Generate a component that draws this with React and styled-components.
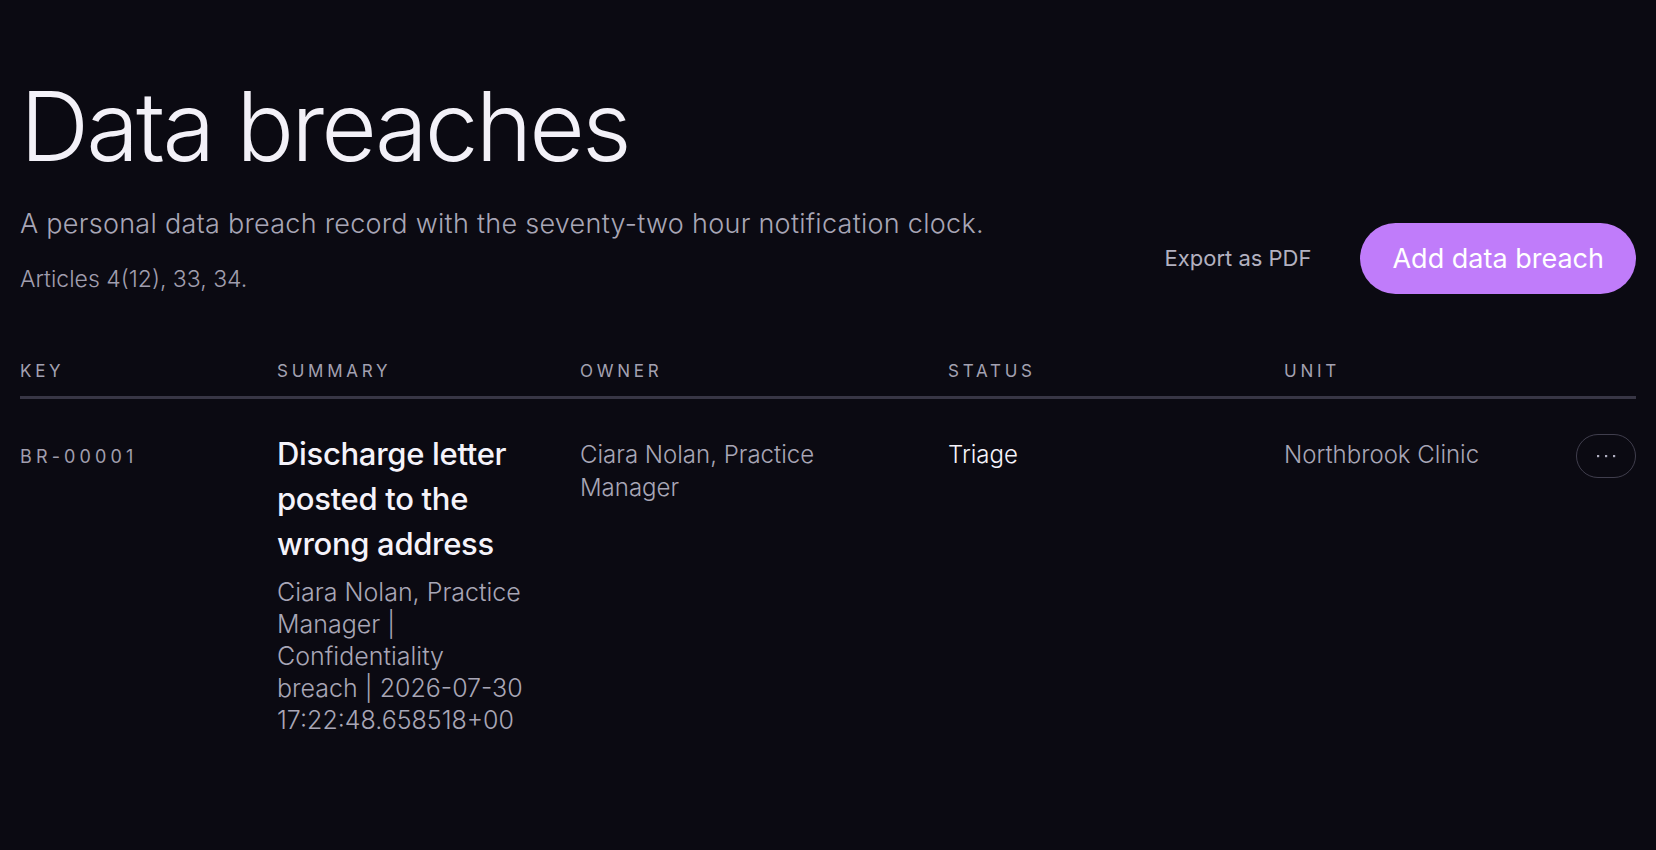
import React from "react";
import styled, { createGlobalStyle } from "styled-components";

const GlobalStyle = createGlobalStyle`
  html, body { margin: 0; padding: 0; background: #0b0a12; }
  body { font-family: Inter, "Noto Sans", sans-serif; color: #f2f0f7; }
  * { box-sizing: border-box; }
`;

const Page = styled.main`
  min-height: 850px;
  padding: 74px 20px 40px;
  background: #0b0a12;
`;

const Header = styled.header`
  display: flex;
  justify-content: space-between;
  align-items: flex-end;
`;

const TitleBlock = styled.div`
  display: flex;
  flex-direction: column;
`;

const Title = styled.h1`
  margin: 0;
  font-size: 96px;
  line-height: 1.1;
  font-weight: 300;
  letter-spacing: -0.03em;
  color: #f3f1f8;
`;

const Subtitle = styled.p`
  margin: 26px 0 0;
  font-size: 27px;
  line-height: 35px;
  font-weight: 300;
  letter-spacing: 0.01em;
  color: #a8a6b6;
`;

const Articles = styled.p`
  margin: 23px 0 0;
  font-size: 23px;
  line-height: 30px;
  font-weight: 300;
  color: #a09eae;
`;

const Actions = styled.div`
  display: flex;
  align-items: center;
  gap: 49px;
`;

const GhostButton = styled.button`
  background: transparent;
  border: none;
  padding: 0;
  font-family: inherit;
  font-size: 22px;
  font-weight: 400;
  color: #b3b1c0;
  cursor: pointer;
`;

const PrimaryButton = styled.button`
  height: 71px;
  padding: 0 32px;
  border: none;
  border-radius: 999px;
  background: #c07cfa;
  color: #ffffff;
  font-family: inherit;
  font-size: 27px;
  font-weight: 400;
  cursor: pointer;
`;

const Table = styled.div`
  margin-top: 65px;
  display: grid;
  grid-template-columns: 257px 303px 368px 336px 1fr 60px;
`;

const HeadCell = styled.div`
  font-size: 17px;
  line-height: 24px;
  letter-spacing: 0.22em;
  text-transform: uppercase;
  color: #a3a1b1;
  padding-bottom: 13px;
  border-bottom: 3px solid #383645;
`;

const Cell = styled.div`
  padding: ${(p) => (p.$tight ? "32px" : "39px")} ${(p) => p.$pr || "48px"} 0 0;
  font-size: 24px;
  line-height: 33px;
  font-weight: 300;
  color: ${(p) => (p.$strong ? "#f5f3fa" : "#a8a6b6")};
`;

const KeyText = styled.span`
  font-size: 18px;
  letter-spacing: 0.23em;
  color: #a09eae;
  font-weight: 400;
`;

const SummaryTitle = styled.div`
  font-size: 31px;
  line-height: 45px;
  font-weight: 500;
  letter-spacing: -0.01em;
  color: #f5f3fa;
`;

const SummaryMeta = styled.div`
  margin-top: 10px;
  max-width: 248px;
  font-size: 25px;
  line-height: 32px;
  font-weight: 300;
  color: #a8a6b6;
`;

const ActionCell = styled.div`
  padding-top: 35px;
  display: flex;
  justify-content: flex-end;
`;

const MoreButton = styled.button`
  width: 60px;
  height: 44px;
  border-radius: 999px;
  border: 1.5px solid #403e4d;
  background: transparent;
  padding: 0;
  display: flex;
  align-items: center;
  justify-content: center;
  cursor: pointer;
`;

function Dots() {
  return (
    <svg width="20" height="4" viewBox="0 0 20 4" aria-hidden="true">
      <rect x="1" y="1" width="2.2" height="2.2" fill="#b0aec0" />
      <rect x="9" y="1" width="2.2" height="2.2" fill="#b0aec0" />
      <rect x="17" y="1" width="2.2" height="2.2" fill="#b0aec0" />
    </svg>
  );
}

export default function App() {
  return (
    <>
      <GlobalStyle />
      <Page>
        <Header>
          <TitleBlock>
            <Title>Data breaches</Title>
            <Subtitle>
              A personal data breach record with the seventy-two hour notification clock.
            </Subtitle>
            <Articles>Articles 4(12), 33, 34.</Articles>
          </TitleBlock>
          <Actions>
            <GhostButton>Export as PDF</GhostButton>
            <PrimaryButton>Add data breach</PrimaryButton>
          </Actions>
        </Header>
        <Table>
          <HeadCell>Key</HeadCell>
          <HeadCell>Summary</HeadCell>
          <HeadCell>Owner</HeadCell>
          <HeadCell>Status</HeadCell>
          <HeadCell>Unit</HeadCell>
          <HeadCell />
          <Cell>
            <KeyText>BR-00001</KeyText>
          </Cell>
          <Cell $tight $pr="36px">
            <SummaryTitle>Discharge letter posted to the wrong address</SummaryTitle>
            <SummaryMeta>
              Ciara Nolan, Practice Manager | Confidentiality breach | 2026-07-30 17:22:48.658518+00
            </SummaryMeta>
          </Cell>
          <Cell>Ciara Nolan, Practice Manager</Cell>
          <Cell $strong>Triage</Cell>
          <Cell>Northbrook Clinic</Cell>
          <ActionCell>
            <MoreButton aria-label="More actions">
              <Dots />
            </MoreButton>
          </ActionCell>
        </Table>
      </Page>
    </>
  );
}
